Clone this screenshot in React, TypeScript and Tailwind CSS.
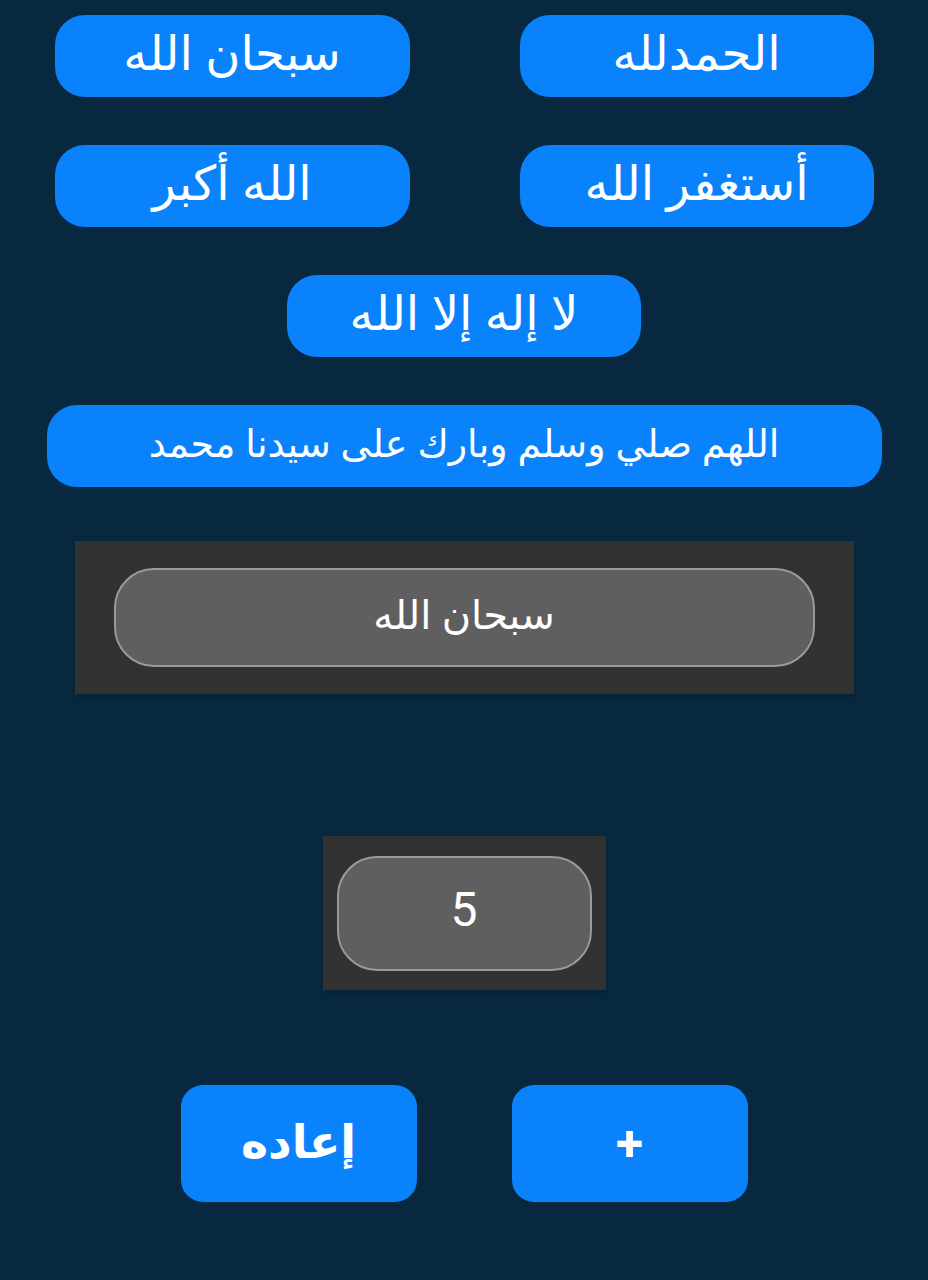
import React, { useState } from 'react';

const arabic = { fontFamily: '"Noto Sans", "DejaVu Sans", sans-serif' };

const Pill: React.FC<{ label: string; className?: string; onClick?: () => void }> = ({ label, className = '', onClick }) => (
  <button
    onClick={onClick}
    className={`h-[82px] rounded-[30px] bg-[#0a82fb] text-white flex items-center justify-center leading-none pb-[8px] ${className}`}
    style={arabic}
  >
    {label}
  </button>
);

const App: React.FC = () => {
  const [current, setCurrent] = useState('سبحان الله');
  const [count, setCount] = useState(5);

  const pick = (t: string) => {
    setCurrent(t);
    setCount(0);
  };

  return (
    <div className="min-h-[1280px] w-full bg-[#08283f] flex flex-col items-center pt-[15px]" dir="ltr">
      <div className="flex gap-[110px]">
        <Pill label="سبحان الله" className="w-[355px] text-[48px]" onClick={() => pick('سبحان الله')} />
        <Pill label="الحمدلله" className="w-[354px] text-[48px]" onClick={() => pick('الحمدلله')} />
      </div>
      <div className="flex gap-[110px] mt-[48px]">
        <Pill label="الله أكبر" className="w-[355px] text-[48px]" onClick={() => pick('الله أكبر')} />
        <Pill label="أستغفر الله" className="w-[354px] text-[48px]" onClick={() => pick('أستغفر الله')} />
      </div>
      <Pill label="لا إله إلا الله" className="w-[354px] text-[48px] mt-[48px]" onClick={() => pick('لا إله إلا الله')} />
      <Pill
        label="اللهم صلي وسلم وبارك على سيدنا محمد"
        className="w-[835px] text-[38px] mt-[48px]"
        onClick={() => pick('اللهم صلي وسلم وبارك على سيدنا محمد')}
      />

      <div className="mt-[54px] w-[779px] h-[153px] bg-[#323232] shadow-md flex items-center justify-center">
        <div
          className="w-[701px] h-[99px] rounded-[40px] bg-[#5f5f5f] border-2 border-[#9a9a9a] text-white text-[40px] leading-none pb-[8px] flex items-center justify-center"
          style={arabic}
        >
          {current}
        </div>
      </div>

      <div className="mt-[142px] w-[283px] h-[154px] bg-[#323232] shadow-md flex items-center justify-center">
        <div className="w-[255px] h-[115px] rounded-[40px] bg-[#5f5f5f] border-2 border-[#9a9a9a] text-white text-[48px] leading-none pb-[6px] flex items-center justify-center font-['Roboto']">
          {count}
        </div>
      </div>

      <div className="mt-[95px] flex gap-[95px]">
        <button
          onClick={() => setCount(0)}
          className="w-[236px] h-[117px] rounded-[22px] bg-[#0a82fb] text-white text-[46px] leading-none font-bold pb-[8px] flex items-center justify-center"
          style={arabic}
        >
          إعاده
        </button>
        <button
          onClick={() => setCount(count + 1)}
          className="w-[236px] h-[117px] rounded-[22px] bg-[#0a82fb] text-white text-[50px] leading-none font-bold flex items-center justify-center font-['Roboto']"
        >
          +
        </button>
      </div>
    </div>
  );
};

export default App;
